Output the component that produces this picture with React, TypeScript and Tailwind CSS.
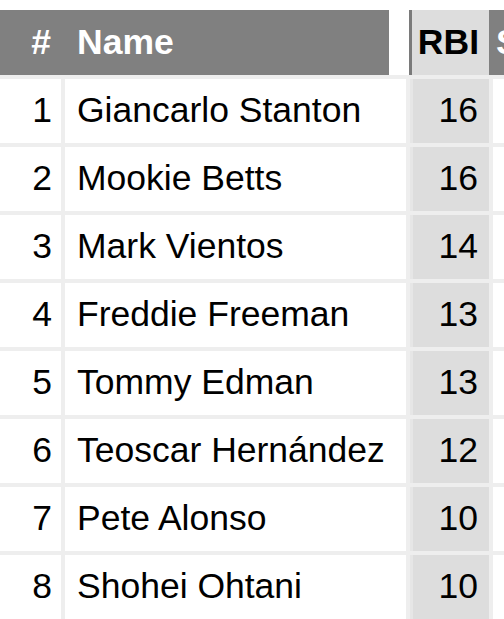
const players = [
  { rank: 1, name: 'Giancarlo Stanton', rbi: 16 },
  { rank: 2, name: 'Mookie Betts', rbi: 16 },
  { rank: 3, name: 'Mark Vientos', rbi: 14 },
  { rank: 4, name: 'Freddie Freeman', rbi: 13 },
  { rank: 5, name: 'Tommy Edman', rbi: 13 },
  { rank: 6, name: 'Teoscar Hernández', rbi: 12 },
  { rank: 7, name: 'Pete Alonso', rbi: 10 },
  { rank: 8, name: 'Shohei Ohtani', rbi: 10 },
]

export default function App() {
  return (
    <div className="h-[619px] w-[504px] overflow-hidden bg-white pt-[10px] font-['Liberation_Sans',Arial,sans-serif] text-[35.5px] leading-none text-black">
      <div className="flex h-[65px] font-bold">
        <div className="flex w-[389px] shrink-0 items-center bg-[#808080] text-white">
          <span className="w-[61px] pr-[10px] text-right">#</span>
          <span className="pl-[16px]">Name</span>
        </div>
        <div className="w-[20px] shrink-0" />
        <div className="flex w-[80px] shrink-0 items-center justify-end border-l-[3px] border-[#7a7a7a] bg-[#dddddd] pr-[10px]">
          RBI
        </div>
        <div className="flex min-w-0 flex-1 items-center overflow-hidden whitespace-nowrap bg-[#808080] pl-[7px] text-white">
          S
        </div>
      </div>

      {players.map((p) => (
        <div key={p.rank} className="flex h-[68px] border-t-4 border-[#eeeeee]">
          <div className="flex w-[61px] shrink-0 items-center justify-end pr-[9px]">
            {p.rank}
          </div>
          <div className="w-[4px] shrink-0 bg-[#eeeeee]" />
          <div className="flex w-[341px] shrink-0 items-center whitespace-nowrap pl-[12px]">
            {p.name}
          </div>
          <div className="w-[4px] shrink-0 bg-[#eeeeee]" />
          <div className="w-[3px] shrink-0 bg-[#e6e6e6]" />
          <div className="flex w-[76px] shrink-0 items-center justify-end bg-[#dddddd] pr-[11px]">
            {p.rbi}
          </div>
          <div className="w-[4px] shrink-0 bg-[#eeeeee]" />
          <div className="flex-1" />
        </div>
      ))}
    </div>
  )
}
